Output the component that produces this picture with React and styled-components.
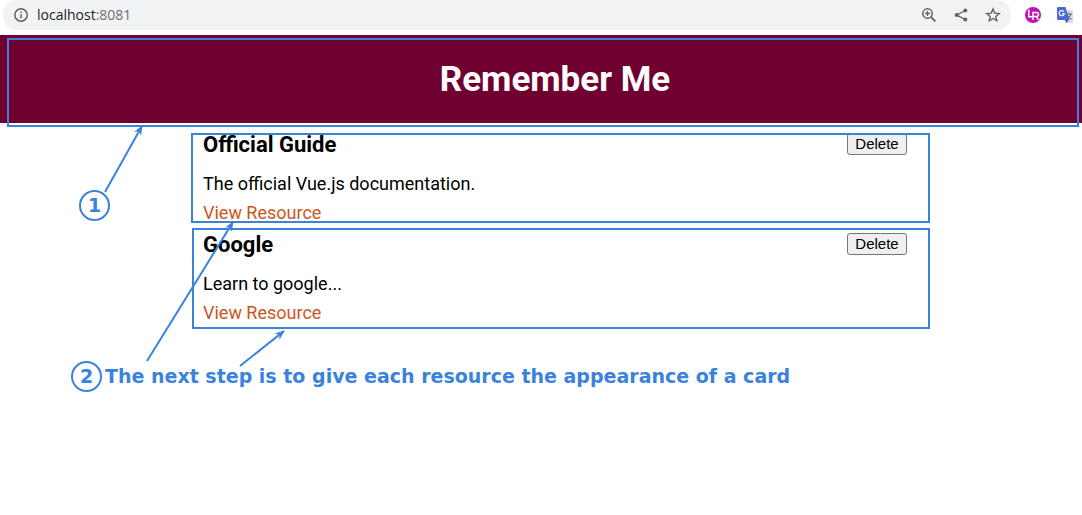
import React from "react";
import styled, { createGlobalStyle } from "styled-components";

const blue = "#3b82dc";

const GlobalStyle = createGlobalStyle`
  * { box-sizing: border-box; }
  body { margin: 0; background: #fff; color: #000; font-family: Roboto, sans-serif; overflow-x: hidden; }
  h1, h2, p, ul { margin: 0; padding: 0; }
`;

const BrowserBar = styled.div`
  display: flex;
  align-items: flex-start;
  height: 35px;
  padding: 0 9px 0 3px;
  gap: 14px;
  background: #fff;
`;

const AddressBar = styled.div`
  flex: 1;
  display: flex;
  align-items: center;
  height: 30px;
  padding: 0 10px;
  gap: 8px;
  border-radius: 14px;
  background: #f1f3f4;
  color: #5f6368;
`;

const Url = styled.span`
  flex: 1;
  font: 14px/20px "Open Sans", sans-serif;
  color: #6b7075;
  b { font-weight: 400; color: #202124; }
`;

const BarActions = styled.div`
  display: flex;
  gap: 16px;
`;

const Extensions = styled.div`
  display: flex;
  align-items: center;
  height: 30px;
  gap: 16px;
`;

const IconButton = styled.button`
  display: block;
  width: 16px;
  height: 16px;
  padding: 0;
  border: 0;
  background: none;
  color: #5f6368;
  svg { display: block; }
`;

const Page = styled.div`
  position: relative;
`;

const Header = styled.header`
  display: flex;
  align-items: center;
  justify-content: center;
  height: 88px;
  padding: 2px 0 0 28px;
  background: #70002f;
  color: #fff;
`;

const Title = styled.h1`
  font-size: 35px;
  line-height: 42px;
`;

const Content = styled.main`
  padding: 10px 0 0 28px;
`;

const ResourceList = styled.ul`
  max-width: 704px;
  margin: 0 auto;
  list-style: none;
`;

const Resource = styled.li`
  position: relative;
  height: 100px;
`;

const ResourceHeader = styled.div`
  display: flex;
  align-items: flex-start;
  justify-content: space-between;
`;

const ResourceTitle = styled.h2`
  font-size: 22px;
  line-height: 24px;
`;

const DeleteButton = styled.button`
  width: 60px;
  height: 22px;
  padding: 0;
  border: 1px solid #767676;
  border-radius: 3px;
  background: #efefef;
  color: #000;
  font: 15px/20px "Liberation Sans", sans-serif;
`;

const Description = styled.p`
  margin-top: 16px;
  font-size: 18px;
  line-height: 22px;
`;

const ResourceLink = styled.a`
  display: inline-block;
  margin-top: 7px;
  color: #c9571d;
  font-size: 18px;
  line-height: 22px;
  text-decoration: none;
`;

const Frame = styled.div`
  position: absolute;
  top: ${(p) => p.$top}px;
  right: ${(p) => p.$right}px;
  left: ${(p) => p.$left}px;
  height: ${(p) => p.$height}px;
  border: 2px solid ${blue};
  pointer-events: none;
`;

const Marker = styled.span`
  display: flex;
  align-items: center;
  justify-content: center;
  width: 31px;
  height: 31px;
  padding-bottom: 2px;
  border: 2px solid ${blue};
  border-radius: 50%;
  color: ${blue};
  font: bold 19px/24px "DejaVu Sans", sans-serif;
`;

const HeaderMarker = styled.div`
  position: absolute;
  top: 155px;
  left: 79px;
`;

const Note = styled.div`
  display: flex;
  align-items: center;
  gap: 3px;
  margin-top: 28px;
  padding-left: 71px;
  color: ${blue};
  font: bold 19px/24px "DejaVu Sans", sans-serif;
  white-space: nowrap;
`;

const NoteText = styled.p`
  padding-bottom: 2px;
`;

const Arrows = styled.svg`
  position: absolute;
  top: 0;
  left: 0;
  pointer-events: none;
`;

const resources = [
  { title: "Official Guide", text: "The official Vue.js documentation.", url: "https://vuejs.org", top: 0, left: -12, height: 90 },
  { title: "Google", text: "Learn to google...", url: "https://google.com", top: -5, left: -11, height: 101 },
];

const InfoIcon = () => (
  <svg width="16" height="16" viewBox="0 0 16 16" fill="none" stroke="currentColor" strokeWidth="1.5" aria-hidden="true">
    <circle cx="8" cy="8" r="6.2" />
    <path d="M8 7.2v4M8 4.4v1.5" />
  </svg>
);

const ZoomIcon = () => (
  <svg width="16" height="16" viewBox="0 0 16 16" fill="none" stroke="currentColor" strokeWidth="1.5">
    <circle cx="6.5" cy="6.5" r="4.7" />
    <path d="M9.8 9.8l4.6 4.6" strokeWidth="1.9" />
    <path d="M4.1 6.5h4.8M6.5 4.1v4.8" strokeWidth="1.3" />
  </svg>
);

const ShareIcon = () => (
  <svg width="16" height="16" viewBox="0 0 16 16" fill="currentColor">
    <path d="M12.3 3.5L3.7 8l8.6 4.6" fill="none" stroke="currentColor" strokeWidth="1.4" />
    <circle cx="12.3" cy="3.5" r="2" />
    <circle cx="3.7" cy="8" r="2" />
    <circle cx="12.3" cy="12.6" r="2" />
  </svg>
);

const StarIcon = () => (
  <svg width="16" height="16" viewBox="0 0 16 16" fill="none" stroke="currentColor" strokeWidth="1.4">
    <path d="M8 2l1.7 4.1 4.5.4-3.4 2.9 1 4.4L8 11.5l-3.8 2.3 1-4.4-3.4-2.9 4.5-.4z" />
  </svg>
);

const RecorderIcon = () => (
  <svg width="16" height="16" viewBox="0 0 16 16">
    <circle cx="8" cy="8" r="8" fill="#c013b5" />
    <path d="M3.8 2.8v7h4.2M8 13V5.6h3.6q1.9 0 1.9 1.9t-1.9 1.9H8M11 9.4l2.6 3.4" fill="none" stroke="#fff" strokeWidth="1.5" />
  </svg>
);

const TranslateIcon = () => (
  <svg width="16" height="16" viewBox="0 0 16 16">
    <path d="M6 3h9q1 0 1 1v11q0 1-1 1H9.5z" fill="#d9dce0" />
    <path d="M9 7h6M12 5.5V7M14 7q-.8 3-4 5M10.5 8.5q1.4 2.5 4 3.8" fill="none" stroke="#687786" strokeWidth="1.1" />
    <path d="M8 13h3.5L9.5 16z" fill="#3447a4" />
    <path d="M1 0h7.5l4 13H1q-1 0-1-1V1q0-1 1-1z" fill="#4a69d4" />
    <path d="M7 4.8a2.6 2.6 0 1 0 .3 2H5" fill="none" stroke="#fff" strokeWidth="1.2" />
  </svg>
);

export default function App() {
  return (
    <>
      <GlobalStyle />
      <BrowserBar>
        <AddressBar>
          <InfoIcon />
          <Url><b>localhost</b>:8081</Url>
          <BarActions>
            <IconButton aria-label="Zoom"><ZoomIcon /></IconButton>
            <IconButton aria-label="Share"><ShareIcon /></IconButton>
            <IconButton aria-label="Bookmark"><StarIcon /></IconButton>
          </BarActions>
        </AddressBar>
        <Extensions>
          <IconButton aria-label="Recorder"><RecorderIcon /></IconButton>
          <IconButton aria-label="Translate"><TranslateIcon /></IconButton>
        </Extensions>
      </BrowserBar>
      <Page>
        <Header><Title>Remember Me</Title></Header>
        <Content>
          <ResourceList>
            {resources.map((r) => (
              <Resource key={r.title}>
                <ResourceHeader>
                  <ResourceTitle>{r.title}</ResourceTitle>
                  <DeleteButton>Delete</DeleteButton>
                </ResourceHeader>
                <Description>{r.text}</Description>
                <ResourceLink href={r.url}>View Resource</ResourceLink>
                <Frame $top={r.top} $left={r.left} $right={-23} $height={r.height} />
              </Resource>
            ))}
          </ResourceList>
        </Content>
        <Note>
          <Marker>2</Marker>
          <NoteText>The next step is to give each resource the appearance of a card</NoteText>
        </Note>
        <Frame $top={3} $left={7} $right={3} $height={89} />
        <HeaderMarker><Marker>1</Marker></HeaderMarker>
        <Arrows width="400" height="340" viewBox="0 35 400 340" fill="none" stroke={blue} strokeWidth="2" aria-hidden="true">
          <defs>
            <marker id="tip" viewBox="0 0 10 8" refX="9" refY="4" markerWidth="10" markerHeight="8" markerUnits="userSpaceOnUse" orient="auto">
              <path d="M0 0L10 4L0 8L3 4z" fill={blue} stroke="none" />
            </marker>
          </defs>
          <path d="M105 192L142 126" markerEnd="url(#tip)" />
          <path d="M147 361L233 222" markerEnd="url(#tip)" />
          <path d="M240 366L284 331" markerEnd="url(#tip)" />
        </Arrows>
      </Page>
    </>
  );
}
